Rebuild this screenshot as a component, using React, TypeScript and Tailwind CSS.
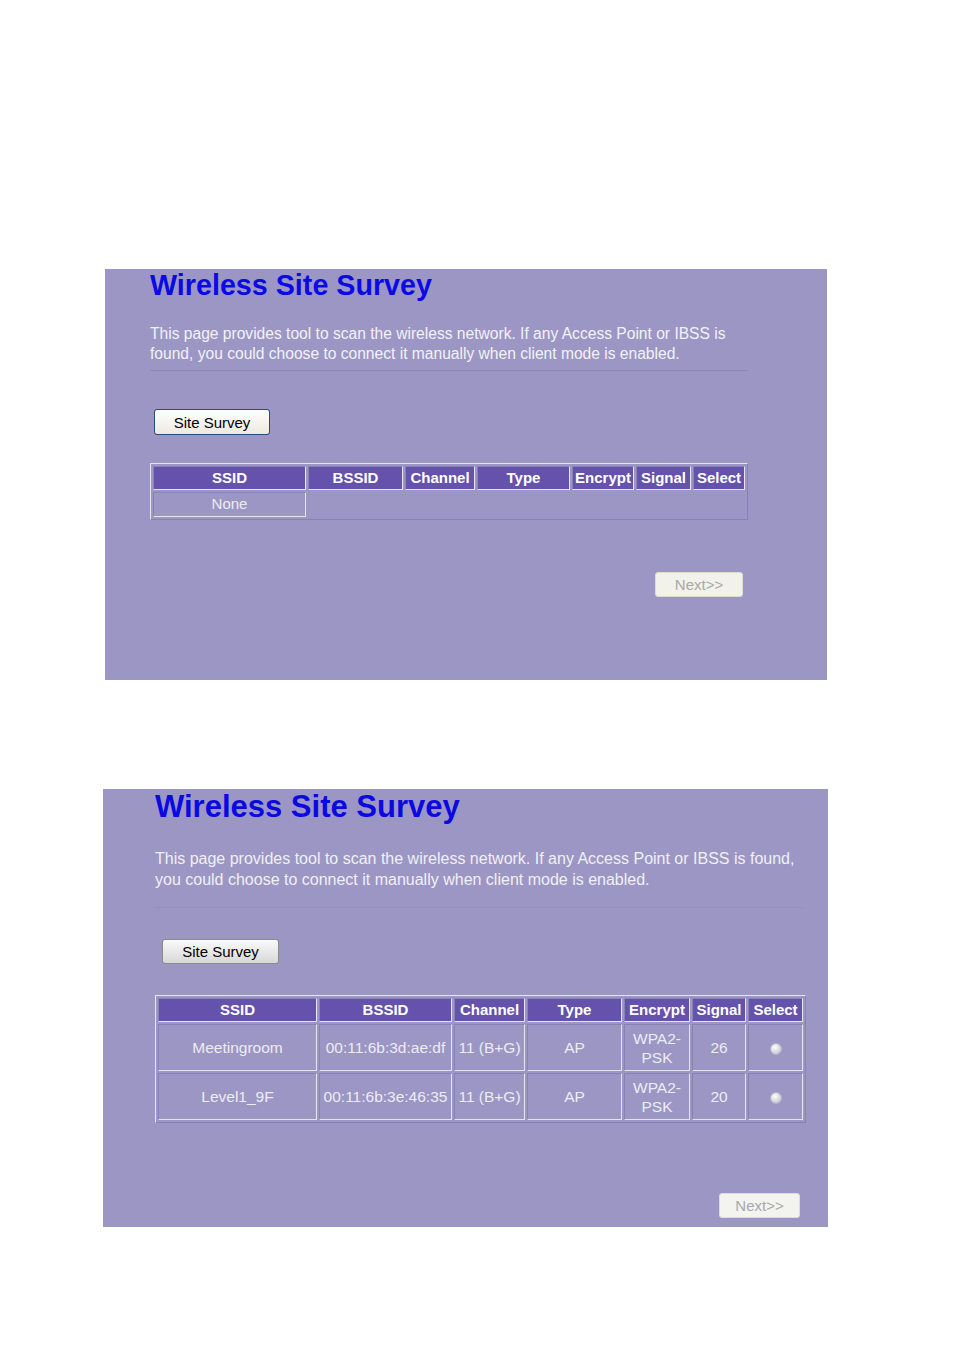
import React from "react"

const font = { fontFamily: '"Liberation Sans", Arial, sans-serif' }

type Col = { label: string; w: number }

const cols1: Col[] = [
  { label: "SSID", w: 153 },
  { label: "BSSID", w: 95 },
  { label: "Channel", w: 70 },
  { label: "Type", w: 93 },
  { label: "Encrypt", w: 62 },
  { label: "Signal", w: 55 },
  { label: "Select", w: 52 },
]

const cols2: Col[] = [
  { label: "SSID", w: 159 },
  { label: "BSSID", w: 133 },
  { label: "Channel", w: 71 },
  { label: "Type", w: 95 },
  { label: "Encrypt", w: 66 },
  { label: "Signal", w: 54 },
  { label: "Select", w: 55 },
]

const networks = [
  { ssid: "Meetingroom", bssid: "00:11:6b:3d:ae:df", channel: "11 (B+G)", type: "AP", enc: "WPA2-PSK", signal: "26" },
  { ssid: "Level1_9F", bssid: "00:11:6b:3e:46:35", channel: "11 (B+G)", type: "AP", enc: "WPA2-PSK", signal: "20" },
]

const cell = "border border-t-[#8882b4] border-l-[#8882b4] border-b-[#e6e4f2] border-r-[#e6e4f2] p-0"

function HeaderRow({ cols }: { cols: Col[] }) {
  return (
    <tr className="h-[24px]">
      {cols.map((c) => (
        <th
          key={c.label}
          style={{ width: c.w }}
          className={`${cell} bg-[#6452ac] text-white font-bold text-[15px] leading-[20px] text-center whitespace-nowrap overflow-hidden`}
        >
          {c.label}
        </th>
      ))}
    </tr>
  )
}

function Radio() {
  return (
    <span className="inline-block w-[12px] h-[12px] rounded-full border border-[#b8b6c8] bg-[radial-gradient(circle_at_40%_35%,#ffffff,#d4d2dc_60%,#b0aebc)] align-middle" />
  )
}

function TableBox({ children, width }: { children: React.ReactNode; width: number }) {
  return (
    <table
      style={{ width }}
      className="table-fixed border-separate border-spacing-[2px] border border-t-[#e6e4f2] border-l-[#e6e4f2] border-b-[#8882b4] border-r-[#8882b4]"
    >
      <tbody>{children}</tbody>
    </table>
  )
}

function FirstPanel() {
  return (
    <div className="ml-[105px] w-[722px] h-[411px] bg-[#9c96c4] pl-[45px]" style={font}>
      <h1 className="text-[28.7px] leading-[32px] font-bold text-[#0a0ae6]">Wireless Site Survey</h1>
      <p className="mt-[23px] w-[620px] text-[15.6px] leading-[20px] text-[#f2f2f6] whitespace-nowrap">
        This page provides tool to scan the wireless network. If any Access Point or IBSS is
        <br />
        found, you could choose to connect it manually when client mode is enabled.
      </p>
      <div className="mt-[6px] w-[598px] h-[1px] bg-[#8c88b2]" />
      <button className="mt-[38px] ml-[4px] w-[116px] h-[26px] rounded-[3px] border border-[#2b4a78] bg-gradient-to-b from-white to-[#ebe9e0] text-[15px] text-black leading-none">
        Site Survey
      </button>
      <div className="mt-[28px]">
        <TableBox width={598}>
          <HeaderRow cols={cols1} />
          <tr className="h-[25px]">
            <td className={`${cell} text-center text-[15px] text-[#ececf4]`}>None</td>
          </tr>
        </TableBox>
      </div>
      <div className="w-[598px] flex justify-end pr-[5px] mt-[52px]">
        <button className="w-[88px] h-[25px] rounded-[3px] border border-[#dddbd2] bg-[#f3f2ea] text-[15px] text-[#a8a8a8] leading-none">
          Next&gt;&gt;
        </button>
      </div>
    </div>
  )
}

function SecondPanel() {
  return (
    <div className="ml-[103px] mt-[109px] w-[725px] h-[438px] bg-[#9c96c4] pl-[52px]" style={font}>
      <h1 className="text-[31px] leading-[36px] font-bold text-[#0a0ae0]">Wireless Site Survey</h1>
      <p className="mt-[23px] w-[660px] text-[16px] leading-[21px] text-[#f0f0f6] whitespace-nowrap">
        This page provides tool to scan the wireless network. If any Access Point or IBSS is found,
        <br />
        you could choose to connect it manually when client mode is enabled.
      </p>
      <div className="mt-[17px] w-[648px] h-[1px] bg-[#938fba]" />
      <button className="mt-[31px] ml-[7px] w-[117px] h-[25px] rounded-[3px] border border-[#8a8a8a] bg-gradient-to-b from-[#fafafa] to-[#d8d8d8] text-[15px] text-black leading-none">
        Site Survey
      </button>
      <div className="mt-[31px]">
        <TableBox width={651}>
          <HeaderRow cols={cols2} />
          {networks.map((n) => (
            <tr key={n.ssid} className="h-[47px] text-[15.5px] text-[#ececf4] text-center">
              <td className={cell}>{n.ssid}</td>
              <td className={`${cell} whitespace-nowrap`}>{n.bssid}</td>
              <td className={`${cell} whitespace-nowrap`}>{n.channel}</td>
              <td className={cell}>{n.type}</td>
              <td className={`${cell} leading-[19px]`}>
                WPA2-
                <br />
                PSK
              </td>
              <td className={cell}>{n.signal}</td>
              <td className={cell}>
                <Radio />
              </td>
            </tr>
          ))}
        </TableBox>
      </div>
      <div className="w-[651px] flex justify-end pr-[6px] mt-[70px]">
        <button className="w-[81px] h-[25px] rounded-[3px] border border-[#dedcd6] bg-[#f3f3f0] text-[15px] text-[#a8a8a8] leading-none">
          Next&gt;&gt;
        </button>
      </div>
    </div>
  )
}

export default function App() {
  return (
    <div className="w-[954px] h-[1350px] bg-white pt-[269px]">
      <FirstPanel />
      <SecondPanel />
    </div>
  )
}
